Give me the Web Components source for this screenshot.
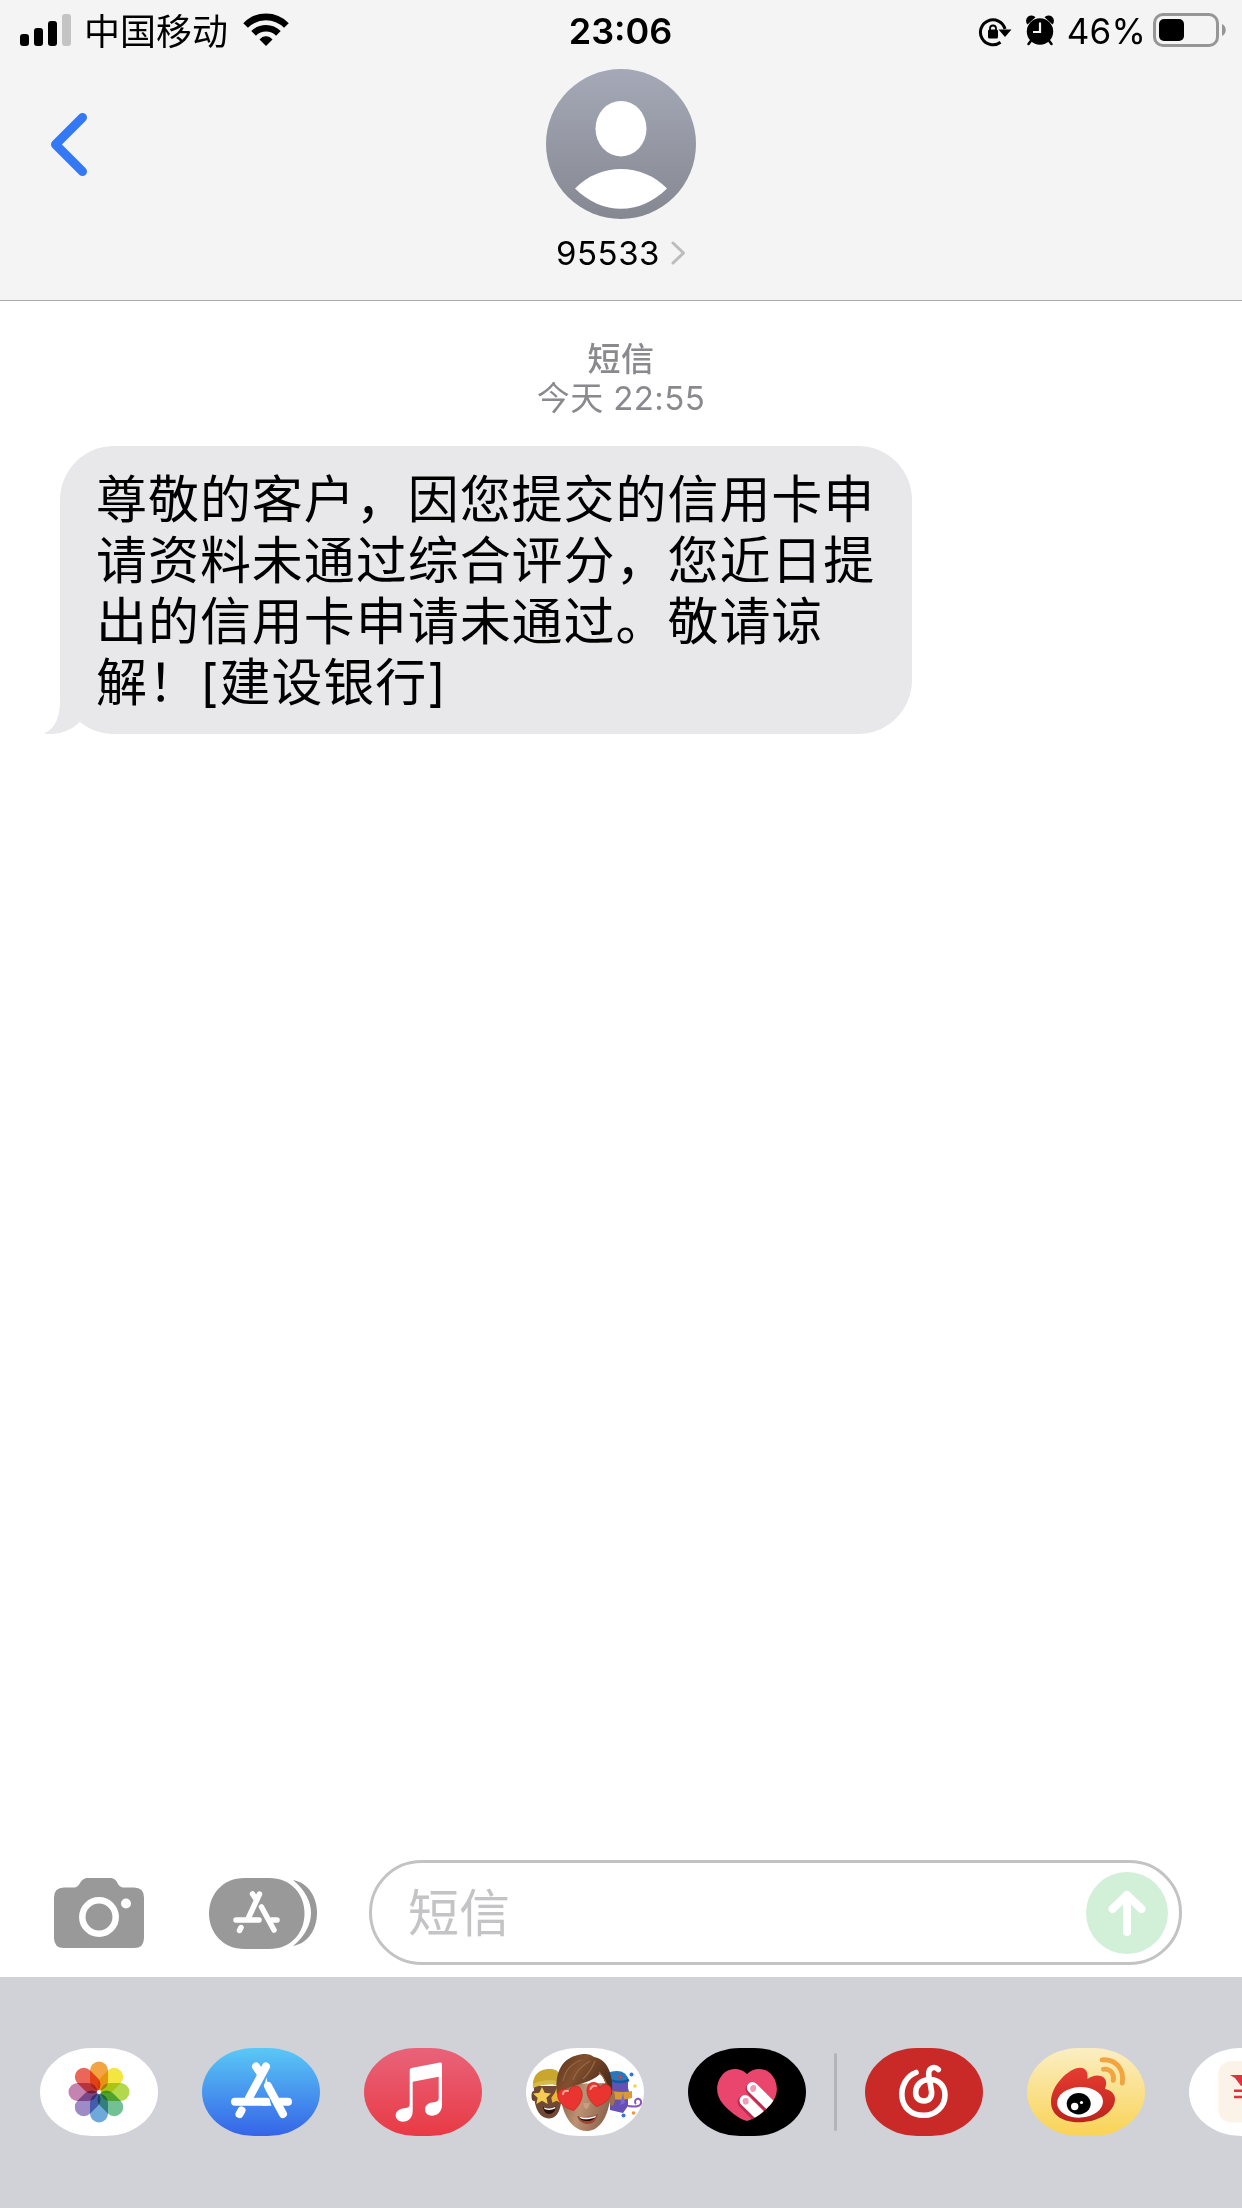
<!DOCTYPE html>
<html lang="zh-CN">
<head>
<meta charset="utf-8">
<title>95533</title>
<style>
  html, body {
    margin: 0;
    padding: 0;
  }

  body {
    width: 1242px;
    height: 2208px;
    overflow: hidden;
    background: #fff;
    color: #000;
    font-family: Inter, 'Noto Sans CJK SC', sans-serif;
  }
</style>
</head>
<body>
<messages-app></messages-app>

<script>
const define = (name, html) => {
  const template = document.createElement('template');
  template.innerHTML = html;

  customElements.define(name, class extends HTMLElement {
    constructor() {
      super();
      this.attachShadow({ mode: 'open' }).appendChild(template.content.cloneNode(true));
    }
  });
};

define('status-bar', `
  <style>
    :host {
      display: grid;
      grid-template-columns: 1fr auto 1fr;
      align-items: center;
      height: 62px;
      padding: 0 14px 0 20px;
      box-sizing: border-box;
      font-size: 35px;
      line-height: 62px;
      white-space: nowrap;
    }

    .side {
      display: flex;
      align-items: center;
      height: 62px;
    }

    .right {
      justify-content: flex-end;
    }

    svg {
      display: block;
      flex: none;
    }

    .carrier {
      margin: 2px 15px 0 12px;
      font-size: 36px;
    }

    .time {
      padding-right: 7px;
      font-size: 36px;
      font-weight: 600;
    }

    .percent {
      margin: 0 7px 0 12px;
      letter-spacing: 0.2px;
    }
  </style>

  <div class="side">
    <svg width="52" height="62">
      <rect x="0" y="34" width="9" height="12" rx="3"/>
      <rect x="14" y="28" width="9" height="18" rx="3"/>
      <rect x="28" y="21" width="9" height="25" rx="3"/>
      <rect x="42" y="14" width="9" height="32" rx="3" fill="#c4c4c4"/>
    </svg>
    <span class="carrier">中国移动</span>
    <svg width="46" height="62" fill="none" stroke="#000" stroke-width="6.6">
      <path d="M2.6 25.5C14 14 32 14 43.400 25.500"/>
      <path d="M10.600 33.300C17.500 26.500 28.500 26.500 35.400 33.300"/>
      <path d="M16.500 39.500C20 35 26 35 29.500 39.500L23 46Z" fill="#000" stroke="none"/>
    </svg>
  </div>
  <span class="time">23:06</span>
  <div class="side right">
    <svg width="77" height="62">
      <path d="M22.500 42.300A12.500 12.500 0 1 1 27 29" fill="none" stroke="#000" stroke-width="3"/>
      <path d="M20.500 29.500H33.500L27 37Z"/>
      <rect x="10" y="29.500" width="10" height="9" rx="1.500"/>
      <path d="M12 30V28.500a3 3 0 0 1 6 0V30" fill="none" stroke="#000" stroke-width="1.800"/>
      <circle cx="62" cy="31.500" r="13.200"/>
      <path d="M49.500 24.500A5.200 5.200 0 0 1 57.500 17.200ZM74.500 24.500A5.200 5.200 0 0 0 66.500 17.200Z"/>
      <path d="M53.500 40L50.500 44M70.500 40L73.500 44" stroke="#000" stroke-width="2.500" stroke-linecap="round"/>
      <path d="M62 22.500V32H55" fill="none" stroke="#f4f4f4" stroke-width="2.200"/>
    </svg>
    <span class="percent">46%</span>
    <svg width="75" height="62">
      <rect x="1.500" y="14.500" width="63" height="31" rx="8.500" fill="none" stroke="#969696" stroke-width="3"/>
      <rect x="6" y="19" width="25" height="22" rx="5"/>
      <path d="M69 24C74 26 74 34 69 36Z" fill="#969696"/>
    </svg>
  </div>
`);

define('contact-header', `
  <style>
    :host {
      display: block;
      height: 301px;
      box-sizing: border-box;
      background: #f4f4f4;
      border-bottom: 1px solid #a9a9ab;
    }

    .row {
      display: grid;
      grid-template-columns: 1fr 150px 1fr;
      padding: 7px 50px 0;
    }

    svg {
      display: block;
    }

    .back {
      margin-top: 43px;
    }

    .name {
      display: flex;
      justify-content: center;
      align-items: center;
      gap: 11px;
      height: 67px;
      font-size: 33px;
      letter-spacing: 0.5px;
    }
  </style>

  <status-bar></status-bar>
  <div class="row">
    <svg class="back" width="40" height="64" fill="none" stroke="#3478f6" stroke-width="9" stroke-linecap="round" stroke-linejoin="round">
      <path d="M32.500 5.500L5.500 32.500L32.500 59.500"/>
    </svg>
    <svg width="150" height="150">
      <linearGradient id="shade" x2="0" y2="1">
        <stop stop-color="#a5a9b7"/>
        <stop offset="1" stop-color="#858891"/>
      </linearGradient>
      <circle cx="75" cy="75" r="75" fill="url(#shade)"/>
      <ellipse cx="75" cy="59.700" rx="25.500" ry="27.700" fill="#fff"/>
      <path d="M29 119.500C54 93.500 96 93.500 121 119.500C94 146.500 56 146.500 29 119.500Z" fill="#fff"/>
    </svg>
  </div>
  <div class="name">
    <span><slot></slot></span>
    <svg width="15" height="24" fill="none" stroke="#bcbcbe" stroke-width="3" stroke-linecap="round" stroke-linejoin="round">
      <path d="M2 2L12.500 12L2 22"/>
    </svg>
  </div>
`);

define('time-stamp', `
  <style>
    :host {
      display: block;
      padding-top: 39px;
      color: #8a8a8e;
      font-size: 33px;
      line-height: 39px;
      letter-spacing: 0.4px;
      text-align: center;
    }

    ::slotted(b) {
      display: block;
      font-weight: 500;
    }
  </style>

  <slot></slot>
`);

define('message-bubble', `
  <style>
    :host {
      display: block;
      position: relative;
      width: 852px;
      height: 288px;
      margin: 28px 0 0 60px;
      padding: 23px 30px 0 36px;
      box-sizing: border-box;
      border-radius: 54px;
      background: #e8e8ea;
      font-size: 51px;
      line-height: 61px;
      letter-spacing: 0.95px;
    }

    .tail {
      position: absolute;
      left: -16px;
      bottom: 0;
    }
  </style>

  <svg class="tail" width="80" height="80" fill="#e8e8ea">
    <path d="M16 0V46C16 62 12 74 0 79.500C14 82 28 76 35.500 68L60 40Z"/>
  </svg>
  <slot></slot>
`);

define('compose-bar', `
  <style>
    :host {
      display: flex;
      align-items: center;
      height: 129px;
      padding: 0 60px 0 54px;
      box-sizing: border-box;
    }

    svg {
      display: block;
      flex: none;
    }

    .camera {
      margin: 1px 65px 0 0;
    }

    .apps {
      margin: 1px 51px 0 0;
    }

    .field {
      display: flex;
      flex: 1;
      justify-content: space-between;
      align-items: center;
      height: 105px;
      padding: 0 11px 0 36px;
      box-sizing: border-box;
      border: 3px solid #c3c3c4;
      border-radius: 53px;
      color: #c4c4c6;
      font-size: 51px;
      line-height: 99px;
    }

    .field span {
      padding-top: 2px;
    }
  </style>

  <svg class="camera" width="90" height="71">
    <path d="M10 9.500H20C27 9.500 25 0 34 0H56C65 0 62 9.500 70 9.500H80Q90 9.500 90 19.500V60Q90 70 80 70H10Q0 70 0 60V19.500Q0 9.500 10 9.500Z" fill="#999"/>
    <circle cx="45" cy="39" r="16.700" fill="none" stroke="#fff" stroke-width="6.500"/>
    <circle cx="72" cy="25.500" r="5" fill="#fff"/>
  </svg>
  <svg class="apps" width="109" height="71">
    <path d="M84 2C116 8 116 62 84 68C108 48 108 22 84 2Z" fill="#999"/>
    <path d="M35.500 0H60C82 0 95.500 16 95.500 35.500S82 71 60 71H35.500C14 71 0 55 0 35.500S14 0 35.500 0Z" fill="#999"/>
    <g fill="none" stroke="#fff" stroke-width="5.500" stroke-linecap="round">
      <path d="M50.500 16L38.500 42M43.500 16L47 21M27 42H50M52.500 29L65 52M62.500 42H68M32 49.500L30.500 52.500"/>
    </g>
  </svg>
  <div class="field">
    <span><slot></slot></span>
    <svg width="82" height="82">
      <circle cx="41" cy="41" r="41" fill="#d2efd8"/>
      <path d="M41 60V23M26.500 37L41 23L55.500 37" fill="none" stroke="#fff" stroke-width="8" stroke-linecap="round" stroke-linejoin="round"/>
    </svg>
  </div>
`);

define('app-pill', `
  <style>
    :host {
      display: block;
      flex: none;
      width: 118px;
      height: 88px;
      border-radius: 52px / 44px;
      background: #fff;
      overflow: hidden;
    }
  </style>

  <slot></slot>
`);

define('app-drawer', `
  <style>
    :host {
      display: flex;
      align-items: flex-start;
      gap: 44px;
      height: 231px;
      padding: 71px 0 0 40px;
      box-sizing: border-box;
      overflow: hidden;
      background: #d1d2d8;
    }

    svg {
      display: block;
      width: 118px;
      height: 88px;
    }

    hr {
      flex: none;
      width: 3px;
      height: 78px;
      margin: 5px -16px 0;
      border: 0;
      border-radius: 2px;
      background: #b3b4b9;
    }

    .petals rect {
      mix-blend-mode: multiply;
    }

    .store {
      background: linear-gradient(#5ac8f5, #3564e8);
    }

    .music {
      background: linear-gradient(#e9637a, #e83a45);
    }

    .digital {
      background: #000;
    }

    .netease {
      background: #c92a28;
    }

    .weibo {
      background: linear-gradient(#fbeec3, #f9d355);
    }
  </style>

  <app-pill>
    <svg viewBox="0 0 118 88">
      <g class="petals" transform="translate(59 44)">
        <rect x="-9" y="-30.500" width="18" height="29" rx="9" fill="#f2a443"/>
        <rect x="-9" y="-30.500" width="18" height="29" rx="9" fill="#f4e641" transform="rotate(45)"/>
        <rect x="-9" y="-30.500" width="18" height="29" rx="9" fill="#b2d84e" transform="rotate(90)"/>
        <rect x="-9" y="-30.500" width="18" height="29" rx="9" fill="#72c094" transform="rotate(135)"/>
        <rect x="-9" y="-30.500" width="18" height="29" rx="9" fill="#6fa9dc" transform="rotate(180)"/>
        <rect x="-9" y="-30.500" width="18" height="29" rx="9" fill="#9c8bc6" transform="rotate(225)"/>
        <rect x="-9" y="-30.500" width="18" height="29" rx="9" fill="#c583b2" transform="rotate(270)"/>
        <rect x="-9" y="-30.500" width="18" height="29" rx="9" fill="#ec6559" transform="rotate(315)"/>
      </g>
      <circle cx="59" cy="44" r="2" fill="#fff"/>
    </svg>
  </app-pill>

  <app-pill class="store">
    <svg viewBox="0 0 118 88" fill="none" stroke="#fff" stroke-width="8" stroke-linecap="round">
      <path d="M64 18.500L47 50M54 18.500L59 26"/>
      <path d="M33 53.700H64"/>
      <path d="M78 53.700H86"/>
      <path d="M39.500 62.500L37.500 66"/>
      <path d="M66 38L81 66"/>
      <path d="M64.500 29.500L62 38L68 46Z" fill="#fff" stroke="none"/>
      <path d="M60 50H67L69.500 57.700H60Z" fill="#fff" stroke="none"/>
    </svg>
  </app-pill>

  <app-pill class="music">
    <svg viewBox="0 0 118 88" fill="#fff">
      <path d="M45.700 22Q45.700 20.500 47.500 20L76 14.500Q78 14.200 78 16V57C78 64 73 67.700 68 67.700C64 67.700 61 65 61 61.500C61 57.500 64 55.300 68 54.500L72 53.700Q74.700 53 74.700 50V28.700L48.700 33.700V63C48.700 70 44 73.700 39 73.700C35 73.700 31.700 71 31.700 67.500C31.700 63.500 35 61.300 39 60.500L43 59.700Q45.700 59 45.700 56Z"/>
    </svg>
  </app-pill>

  <app-pill>
    <svg viewBox="0 0 118 88">
      <linearGradient id="skin" x2="1" y2="0.300">
        <stop stop-color="#82583f"/>
        <stop offset="0.500" stop-color="#bd9274"/>
        <stop offset="1" stop-color="#8f6850"/>
      </linearGradient>
      <linearGradient id="hair" x2="1" y2="0.500">
        <stop stop-color="#5b331c"/>
        <stop offset="0.450" stop-color="#81502f"/>
        <stop offset="1" stop-color="#4f2d1a"/>
      </linearGradient>

      <!-- left friend: yellow beanie and star eyes -->
      <ellipse cx="8" cy="48" rx="2.500" ry="5" fill="#6b422d"/>
      <path d="M8 38C7 60 13 70 23 70.500C32 70 36 62 36 38Z" fill="#6f4935"/>
      <path d="M7 40C6 26 14 21 24 21C33 21 36 27 36 38C26 35 15 36 7 40Z" fill="#c9a72f"/>
      <path d="M7 40C14 36 26 35 36 38V34C26 31 14 32 7 36Z" fill="#d9ba45"/>
      <path d="M16 39l2.700 5.700 6.300.7-4.600 4.300 1.300 6.300-5.700-3.200-5.600 3.200 1.200-6.300L7 45.400l6.300-.7Z" fill="#f4cd52"/>
      <path d="M31 39l2.500 5.700 6 .7-4.500 4.300 1.300 6.300-5.500-3.200-4.500 2-1-5 3.500-5Z" fill="#e9b63a"/>
      <path d="M17 59Q24 62 30 58Q29 66 23 66Q18 66 17 59Z" fill="#2c100d"/>
      <path d="M18 59.500Q24 62 29.500 58.800L29 60.500Q24 63 18.500 61Z" fill="#fff"/>

      <!-- right friend: blue hat, mask and confetti -->
      <path d="M84 32H102V40L104 47L102 50V58L97 65L84 62Z" fill="#6650b5"/>
      <path d="M84 24Q100 20 103 33Q94 37 84 34Z" fill="#2878bd"/>
      <path d="M84 32Q94 36 103 32" fill="none" stroke="#1b579c" stroke-width="2.500"/>
      <path d="M86 43Q97 45 106 43V50Q97 53 86 51Z" fill="#d99a32"/>
      <path d="M97 45L99 55L94 57Z" fill="#7d68d2"/>
      <path d="M102 58Q116 60 115 54A3 3 0 1 0 110 56" fill="none" stroke="#8b58bb" stroke-width="2"/>
      <circle cx="94" cy="29" r="1.800" fill="#de3939"/>
      <circle cx="105.500" cy="26.500" r="2" fill="#3474d8"/>
      <circle cx="109" cy="38" r="1.800" fill="#efd54b"/>
      <circle cx="97.500" cy="67.500" r="2" fill="#3474d8"/>
      <circle cx="107.500" cy="65" r="1.800" fill="#eb9640"/>

      <!-- front face -->
      <ellipse cx="86" cy="50" rx="3" ry="8" fill="#9b7053"/>
      <path d="M34 36C33 58 42 83 61 83C76 83 86 62 85 35Z" fill="url(#skin)"/>
      <path d="M31 46C28 22 38 10 52 7C60 5 64 6 68 9C80 11 88 24 86 47L83 44L77 29L74 26C66 34 52 36 42 40C36 42 34 46 31 46Z" fill="url(#hair)"/>
      <path d="M37 33Q40 18 55 12M47 32Q51 20 64 13M57 31Q65 23 69 13M73 24Q79 30 81 38" fill="none" stroke="#9b6743" stroke-width="1.200"/>
      <path d="M57 55Q60 67 64 55" fill="#c99f84"/>
      <path d="M51 68C57 70 67 69 72 66C70 73 67 76 61 76C55 75 53 73 51 68Z" fill="#a14434"/>
      <path d="M52.500 68.500C58 70.500 66 69.500 70.500 67.500C68.500 71 66 73 61 73C56.500 73 54 71.500 52.500 68.500Z" fill="#260b0b"/>
      <path d="M53 68.500C58 70.500 66 69.500 70.500 67.500L69 69.500C64 71.500 57 72 54 70Z" fill="#fff"/>
      <g fill="#e93430" stroke="#c4231f" stroke-width="0.600">
        <path d="M0 12C-14 4-14-11-6-12Q-1-12 0-7Q1-12 6-12C14-11 14 4 0 12Z" transform="translate(45 51) rotate(-14) scale(1.080 0.980)"/>
        <path d="M0 12C-14 4-14-11-6-12Q-1-12 0-7Q1-12 6-12C14-11 14 4 0 12Z" transform="translate(72.500 47) rotate(10) scale(1.080 0.980)"/>
      </g>
      <path d="M37 46Q38 42 42 43M64.500 41Q66 37 70 38" fill="none" stroke="#ffa79b" stroke-width="2" stroke-linecap="round"/>
    </svg>
  </app-pill>

  <app-pill class="digital">
    <svg viewBox="0 0 118 88">
      <clipPath id="heart">
        <path d="M59 26C66 19 76 20 82 25C91 34 91 47 83 56C76 64 67 71 59 73C51 71 42 64 35 56C27 47 27 34 36 25C42 20 52 19 59 26Z"/>
      </clipPath>
      <g clip-path="url(#heart)">
        <rect width="118" height="88" fill="#ea456c"/>
        <path d="M64 41L86 63M56 54L78 76" stroke="#b92d51" stroke-width="13" stroke-linecap="round"/>
        <path d="M64.300 39.500L88 63M57 52.500L80 75" stroke="#fff" stroke-width="11" stroke-linecap="round"/>
        <path d="M62 40.500A3.500 3.500 0 0 1 68 38V42Q66 45 63 43.500ZM54.500 53A3.500 3.500 0 0 1 60.500 51V55Q58.500 58 55.500 56Z" fill="#f19bb5"/>
      </g>
    </svg>
  </app-pill>

  <hr>

  <app-pill class="netease">
    <svg viewBox="0 0 118 88" fill="none" stroke="#fff" stroke-width="5.600" stroke-linecap="round">
      <path d="M51 24.500C31 32 31 67.300 59 67.300C71 67.300 80 58 80 47C80 37 73 31.500 65 31.500C56 31.500 50.700 37.500 50.700 44.500C50.700 50 54 53 59 53C64 53 67.500 49 66.500 43L63.700 27C63 20 69 17.500 73.300 21.500"/>
    </svg>
  </app-pill>

  <app-pill class="weibo">
    <svg viewBox="0 0 118 88">
      <linearGradient id="flame" x2="0" y2="1">
        <stop stop-color="#e83c32"/>
        <stop offset="1" stop-color="#ba241d"/>
      </linearGradient>
      <path d="M24 54C24 37 42 20 53 19.700C60 20 61 25 60.500 31C66 27 74 26 78 31C80 34 79 38 78 41C84 42 88 46 88 51C88 65 70 74.300 52 74.300C37 74.300 24 68 24 54Z" fill="url(#flame)"/>
      <ellipse cx="53" cy="54.300" rx="23" ry="15.300" fill="#fff" transform="rotate(-3 53 54.300)"/>
      <ellipse cx="51.700" cy="55.700" rx="12" ry="10.700"/>
      <circle cx="47.700" cy="58.500" r="3.700" fill="#fff"/>
      <circle cx="54.500" cy="54.500" r="1.600" fill="#fff"/>
      <path d="M75 11.800C89 11 97.500 21 95.300 35.200M76.300 21.300C83 20.500 87.500 25.500 86.300 32.300" fill="none" stroke="#f1a440" stroke-width="4.800" stroke-linecap="round"/>
    </svg>
  </app-pill>

  <app-pill>
    <svg viewBox="0 0 118 88">
      <rect x="29.300" y="13" width="62" height="61.500" rx="13" fill="#fbf3e8"/>
      <path d="M41 27H53L60 38H52L46 30Z" fill="#de333c"/>
      <path d="M45 42.700H75M45 49H75" stroke="#de333c" stroke-width="2.600"/>
    </svg>
  </app-pill>
`);

define('messages-app', `
  <style>
    :host {
      display: flex;
      flex-direction: column;
      width: 1242px;
      height: 2208px;
    }

    .thread {
      flex: 1;
    }
  </style>

  <contact-header>95533</contact-header>
  <div class="thread">
    <time-stamp><b>短信</b>今天 22:55</time-stamp>
    <message-bubble>尊敬的客户，因您提交的信用卡申请资料未通过综合评分，您近日提出的信用卡申请未通过。敬请谅解！[建设银行]</message-bubble>
  </div>
  <compose-bar>短信</compose-bar>
  <app-drawer></app-drawer>
`);
</script>
</body>
</html>
